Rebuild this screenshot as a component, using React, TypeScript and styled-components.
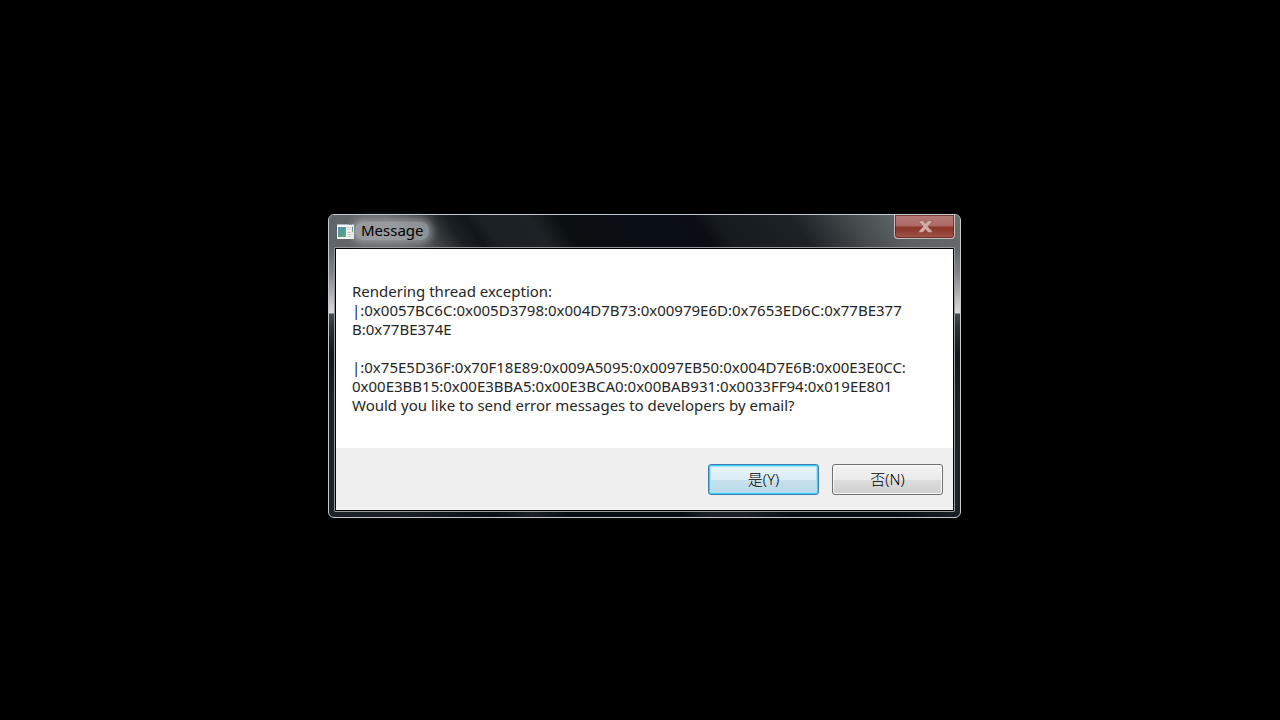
import React from 'react';
import styled, { createGlobalStyle, css } from 'styled-components';

const GlobalStyle = createGlobalStyle`
  * { box-sizing: border-box; }
  html, body { margin: 0; background: #000; }
`;

const Desktop = styled.main`
  min-height: 100vh;
  display: flex;
  align-items: center;
  justify-content: center;
  padding: 12px 0 0 9px;
  background: #000;
  color: #262626;
  font-family: "Noto Sans", "Noto Sans CJK SC", sans-serif;
  font-size: 15px;
  font-weight: 400;
  line-height: 19px;
`;

const Window = styled.section`
  width: 100%;
  max-width: 633px;
  padding: 0 5px 5px;
  border: 1px solid #c3c9cc;
  border-radius: 6px;
  background:
    linear-gradient(90deg, #1d2227 0, #1a1e25 12%, #080c14 26%, #1b1f27 32%, #080c14 38%, #080c14 56%, #1b2028 60%, #1b2028 66%, #080c14 74%, #080c14 90%, #1a1e25 100%) bottom / 100% 5px no-repeat,
    linear-gradient(180deg, #66696b 0, #66696b 36px, #85878a 60px, #cfcfcf 92px, #d8d8d8 98px, #454b4e 99px, #2b3135 112px, #12171b 140px, #1c2226 190px, #1d2227 100%);
`;

const TitleBar = styled.header`
  display: flex;
  align-items: center;
  height: 32px;
  margin: 0 -5px;
  padding: 0 5px 0 7px;
  border-radius: 5px 5px 0 0;
  background: linear-gradient(56deg, #606568 0, #5f6467 12%, #474c4f 16%, #1a1f23 21%, #11161a 24%, #1b2024 26%, #1d2226 34%, #0a0f12 38%, #0a0e17 53%, #0a0e13 59%, #151a1e 62%, #1a1f24 70%, #1d2227 74%, #454a4d 83%, #5b6063 89%, #606568 94%, #696e70 100%);
`;

const AppIcon = styled.svg`
  display: block;
  width: 19px;
  height: 17px;
`;

const Title = styled.h1`
  margin: 0 auto 0 0;
  padding: 0 5px 2px 6px;
  border-radius: 8px;
  background: rgba(190, 193, 195, 0.6);
  box-shadow: 0 0 8px 3px rgba(190, 193, 195, 0.6);
  color: #000;
  font-size: 15px;
  font-weight: 400;
  line-height: 16px;
`;

const CloseButton = styled.button`
  align-self: flex-start;
  display: flex;
  align-items: center;
  justify-content: center;
  width: 61px;
  height: 24px;
  padding: 0 0 1px 2px;
  border: 1px solid #c5bfbf;
  border-top: 0;
  border-radius: 0 0 4px 4px;
  background: linear-gradient(180deg, #b57c77 0, #ad6a64 11px, #8d3529 12px, #96463b 19px, #a95c50 100%);
  box-shadow: inset 0 0 0 1px rgba(70, 20, 18, 0.6);
`;

const Client = styled.div`
  border: 1px solid #97999c;
  border-radius: 1px;
  background: #000;
  padding: 1px;
`;

const Message = styled.div`
  padding: 33px 16px;
  background: #fff;
  overflow-wrap: anywhere;
`;

const Line = styled.p`
  min-height: 19px;
  margin: 0;
`;

const Footer = styled.footer`
  display: flex;
  justify-content: flex-end;
  gap: 13px;
  padding: 16px 10px 15px;
  background: #efefef;
`;

const PushButton = styled.button<{ $primary?: boolean }>`
  width: 111px;
  height: 31px;
  padding: 0;
  border: 1px solid #707070;
  border-radius: 3px;
  background: linear-gradient(180deg, #f2f2f2 0, #ebebeb 50%, #dddddd 50%, #cfcfcf 100%);
  box-shadow: inset 0 0 0 1px #fafafa;
  color: #000;
  font: inherit;
  font-weight: 300;
  ${({ $primary }) =>
    $primary &&
    css`
      border-color: #3c7fb1;
      background: linear-gradient(180deg, #eaf4f9 0, #dcedf5 50%, #c8e1ee 50%, #b9d9e9 100%);
      box-shadow: inset 0 0 0 1px #41cbf7, inset 0 0 0 2px #a5e3f7;
    `}
`;

const lines = [
  'Rendering thread exception:',
  '|:0x0057BC6C:0x005D3798:0x004D7B73:0x00979E6D:0x7653ED6C:0x77BE377',
  'B:0x77BE374E',
  '',
  '|:0x75E5D36F:0x70F18E89:0x009A5095:0x0097EB50:0x004D7E6B:0x00E3E0CC:',
  '0x00E3BB15:0x00E3BBA5:0x00E3BCA0:0x00BAB931:0x0033FF94:0x019EE801',
  'Would you like to send error messages to developers by email?',
];

function ProgramIcon() {
  return (
    <AppIcon viewBox="0 0 19 17" aria-hidden="true">
      <defs>
        <linearGradient id="pane" x1="0" y1="0" x2="1" y2="1">
          <stop offset="0" stopColor="#5a8fc0" />
          <stop offset="0.5" stopColor="#4f9c8c" />
          <stop offset="1" stopColor="#69b477" />
        </linearGradient>
        <linearGradient id="meter" x1="0" y1="0" x2="0" y2="1">
          <stop offset="0" stopColor="#3457a8" />
          <stop offset="1" stopColor="#62b36b" />
        </linearGradient>
      </defs>
      <rect x="1" y="1" width="17" height="15" fill="#f5f6f8" />
      <rect x="1" y="1" width="17" height="1" fill="#aab4c2" />
      <rect x="13" y="1" width="1" height="1" fill="#6d7784" />
      <rect x="15" y="1" width="1" height="1" fill="#6d7784" />
      <rect x="2" y="4" width="8" height="10" fill="url(#pane)" />
      <path d="M11 4.500h3M11 6.500h3M11 9.500h4M11 11.500h4M11 13.500h4" stroke="#cdd0d4" />
      <rect x="16" y="4" width="1" height="5" fill="url(#meter)" />
    </AppIcon>
  );
}

export default function App() {
  return (
    <>
      <GlobalStyle />
      <Desktop>
        <Window role="dialog" aria-labelledby="dialog-title">
          <TitleBar>
            <ProgramIcon />
            <Title id="dialog-title">Message</Title>
            <CloseButton type="button" aria-label="Close">
              <svg width="15" height="13" viewBox="0 0 15 13" aria-hidden="true">
                <path
                  d="M1 .5H5L7.500 3.500 10 .5H14V2L9.800 6.500 14 11V12.500H10L7.500 9.500 5 12.500H1V11L5.200 6.500 1 2Z"
                  fill="#d3a8a3"
                  stroke="#8d5650"
                  strokeWidth="0.6"
                />
              </svg>
            </CloseButton>
          </TitleBar>
          <Client>
            <Message>
              {lines.map((text, i) => (
                <Line key={i}>{text}</Line>
              ))}
            </Message>
            <Footer>
              <PushButton type="button" $primary>是(Y)</PushButton>
              <PushButton type="button">否(N)</PushButton>
            </Footer>
          </Client>
        </Window>
      </Desktop>
    </>
  );
}
